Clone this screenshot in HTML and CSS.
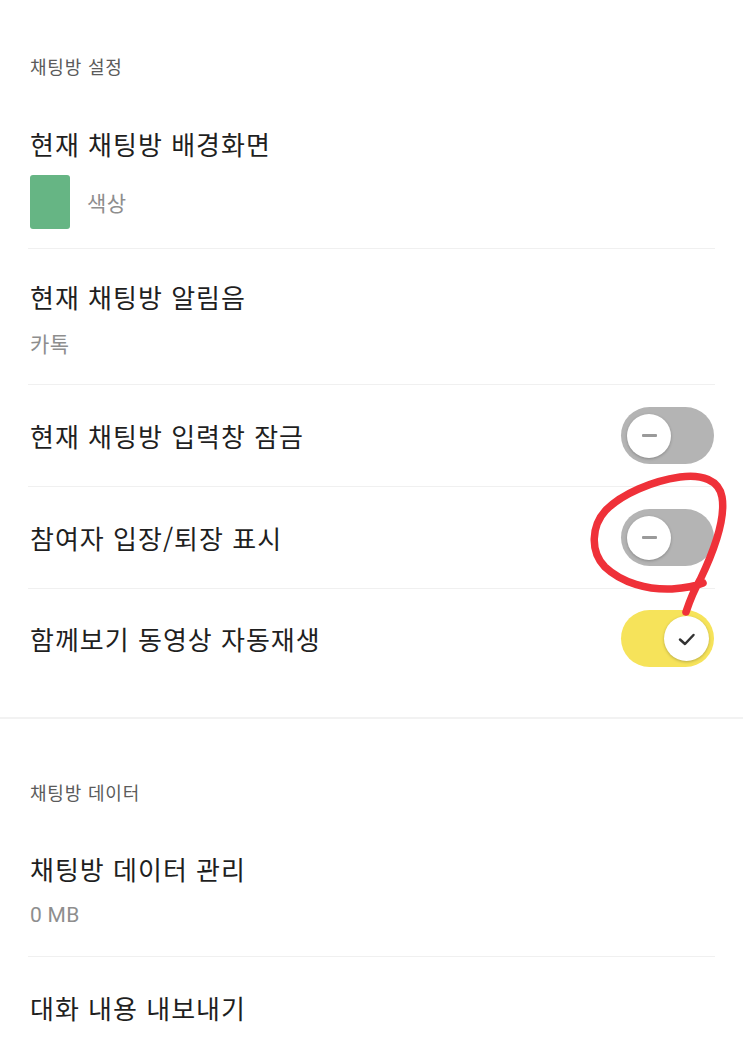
FILE: index.html
```html
<!DOCTYPE html>
<html lang="ko">
<head>
<meta charset="utf-8">
<title>채팅방 설정</title>
<link rel="stylesheet" href="styles.css">
</head>
<body>
<div class="page">
  <section class="section first">
    <div class="section-title">채팅방 설정</div>
    <div class="item item-bg">
      <div class="title">현재 채팅방 배경화면</div>
      <div class="bg-line">
        <span class="swatch"></span>
        <span class="sub">색상</span>
      </div>
    </div>
    <div class="item item-sub">
      <div class="title">현재 채팅방 알림음</div>
      <div class="sub">카톡</div>
    </div>
    <div class="item item-toggle">
      <div class="title">현재 채팅방 입력창 잠금</div>
      <span class="toggle off"><span class="knob"><span class="minus"></span></span></span>
    </div>
    <div class="item item-toggle">
      <div class="title">참여자 입장/퇴장 표시</div>
      <span class="toggle off"><span class="knob"><span class="minus"></span></span></span>
    </div>
    <div class="item item-toggle last">
      <div class="title">함께보기 동영상 자동재생</div>
      <span class="toggle on"><span class="knob">
        <svg class="check" viewBox="0 0 24 24" width="24" height="24"><path d="M5 12.5 L10 17 L18.5 8" fill="none" stroke="#333" stroke-width="2.5" stroke-linecap="round" stroke-linejoin="round"/></svg>
      </span></span>
    </div>
  </section>
  <section class="section second">
    <div class="section-title">채팅방 데이터</div>
    <div class="item item-sub">
      <div class="title">채팅방 데이터 관리</div>
      <div class="sub latin">0 MB</div>
    </div>
    <div class="item item-plain last">
      <div class="title">대화 내용 내보내기</div>
    </div>
  </section>
</div>
<svg class="annotation" width="743" height="1063" viewBox="0 0 743 1063">
  <path d="M686 612 C690 600, 694 590, 700 580 C712 555, 726 520, 722 497 C719 480, 702 474, 680 477 C652 481, 622 494, 606 510 C591 526, 590 552, 605 567 C622 583, 648 590, 672 589 C686 588, 696 586, 703 583" fill="none" stroke="#ef3139" stroke-width="7.5" stroke-linecap="round" stroke-linejoin="round"/>
</svg>
</body>
</html>
```
FILE: styles.css
```css
html, body {
  margin: 0;
  padding: 0;
  background: #ffffff;
}
body {
  font-family: "Noto Sans CJK KR", "Noto Sans", Roboto, sans-serif;
  color: #1f1f1f;
  width: 743px;
  height: 1063px;
  overflow: hidden;
  position: relative;
}
.section {
  padding: 0 28px;
}
.section.first {
  padding-top: 54px;
  padding-bottom: 27px;
  border-bottom: 2px solid #f2f2f2;
}
.section.second {
  padding-top: 61px;
}
.section-title {
  font-size: 18px;
  line-height: 24px;
  letter-spacing: 0.8px;
  color: #5b5b5b;
  margin-bottom: 18px;
  padding-left: 2px;
}
.second .section-title {
  margin-bottom: 17px;
}
.item {
  border-bottom: 1px solid #f0f0f0;
  padding-left: 2px;
}
.item.last {
  border-bottom: none;
}
.title {
  font-size: 26px;
  line-height: 36px;
  letter-spacing: 1px;
  color: #1f1f1f;
}
.sub {
  font-size: 21px;
  line-height: 28px;
  letter-spacing: 0.5px;
  color: #8e8e8e;
}
.sub.latin {
  font-family: Roboto, "Noto Sans CJK KR", sans-serif;
  letter-spacing: 0.3px;
}
.item-bg {
  padding: 30px 0 19px 2px;
}
.bg-line {
  display: flex;
  align-items: center;
  margin-top: 13px;
  gap: 17px;
}
.swatch {
  width: 40px;
  height: 54px;
  border-radius: 3px;
  background: #66b584;
}
.item-sub {
  padding: 30px 0 27px 2px;
}
.item-sub .sub {
  margin-top: 14px;
}
.item-plain {
  padding: 33px 0 20px 2px;
}
.item-toggle {
  display: flex;
  align-items: center;
  justify-content: space-between;
  padding: 22px 0 22px 2px;
}
.item-toggle.last {
  padding-top: 21px;
  padding-bottom: 23px;
}
.toggle {
  width: 93px;
  height: 57px;
  border-radius: 29px;
  display: flex;
  align-items: center;
  padding: 0 6px;
  box-sizing: border-box;
  margin-right: 1px;
}
.toggle.off {
  background: #b4b4b4;
  justify-content: flex-start;
}
.toggle.on {
  background: #f6e35a;
  justify-content: flex-end;
  padding-right: 5px;
}
.knob {
  width: 44px;
  height: 44px;
  border-radius: 50%;
  background: #ffffff;
  box-shadow: 0 1px 3px rgba(0, 0, 0, 0.25);
  display: flex;
  align-items: center;
  justify-content: center;
}
.on .knob {
  width: 45px;
  height: 45px;
}
.minus {
  width: 15px;
  height: 2.5px;
  border-radius: 1px;
  background: #9a9a9a;
}
.annotation {
  position: absolute;
  left: 0;
  top: 0;
  pointer-events: none;
}
```
